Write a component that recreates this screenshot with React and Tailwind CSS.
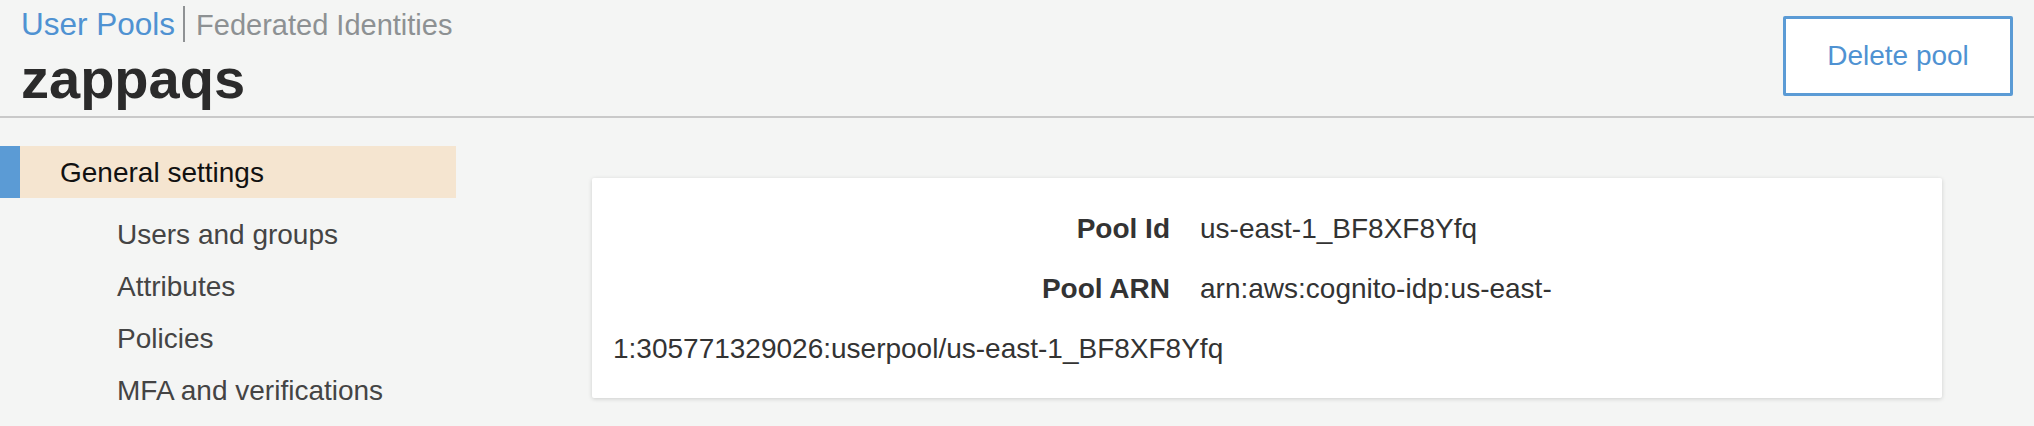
import React from 'react';

const subItems = ['Users and groups', 'Attributes', 'Policies', 'MFA and verifications'];

export default function App() {
  return (
    <div className="w-[2034px] h-[426px] overflow-hidden bg-[#f4f5f4] font-['Liberation_Sans',Arial,sans-serif]">
      {/* Header */}
      <header className="h-[118px] flex justify-between items-start border-b-2 border-[#c9c9c9] px-[21px]">
        <div>
          <div className="flex items-baseline pt-[4px] h-[44px]">
            <span className="text-[31.5px] leading-[40px] text-[#4f92d2]">User Pools</span>
            <span className="self-center w-[2px] h-[36px] bg-[#8f9294] ml-[8px]" />
            <span className="text-[29px] leading-[40px] text-[#8d9193] ml-[11px]">Federated Identities</span>
          </div>
          <h1 className="mt-[5px] text-[56px] leading-[60px] font-bold text-[#2b2b2b]">zappaqs</h1>
        </div>
        <button className="mt-[16px] w-[230px] h-[80px] bg-white border-[3px] border-[#5b9bd5] rounded-[2px] text-[28px] text-[#4f92d2]">
          Delete pool
        </button>
      </header>

      <div className="flex">
        {/* Sidebar */}
        <nav className="w-[456px] pt-[28px]">
          <div className="flex h-[52px] bg-[#f5e5d0]">
            <div className="w-[20px] bg-[#5b9bd5]" />
            <span className="pl-[40px] pt-[1px] text-[28px] leading-[52px] text-[#111]">General settings</span>
          </div>
          <ul className="mt-[11px]">
            {subItems.map(item => (
              <li key={item} className="pl-[117px] text-[28px] leading-[52px] text-[#444]">
                {item}
              </li>
            ))}
          </ul>
        </nav>

        {/* Main */}
        <main className="pl-[136px] pt-[60px]">
          <div className="w-[1350px] h-[220px] bg-white rounded-[2px] px-[21px] pt-[21px] pb-[19px] shadow-[0_1px_4px_rgba(0,0,0,0.16)] text-[28px] leading-[60px] text-[#333]">
            <div>
              <span className="inline-block w-[587px] pr-[30px] text-right font-bold">Pool Id</span>
              <span>us-east-1_BF8XF8Yfq</span>
            </div>
            <div>
              <span className="inline-block w-[587px] pr-[30px] text-right font-bold">Pool ARN</span>
              <span>
                arn:aws:cognito-idp:us-east-
                <br />
                1:305771329026:userpool/us-east-1_BF8XF8Yfq
              </span>
            </div>
          </div>
        </main>
      </div>
    </div>
  );
}
